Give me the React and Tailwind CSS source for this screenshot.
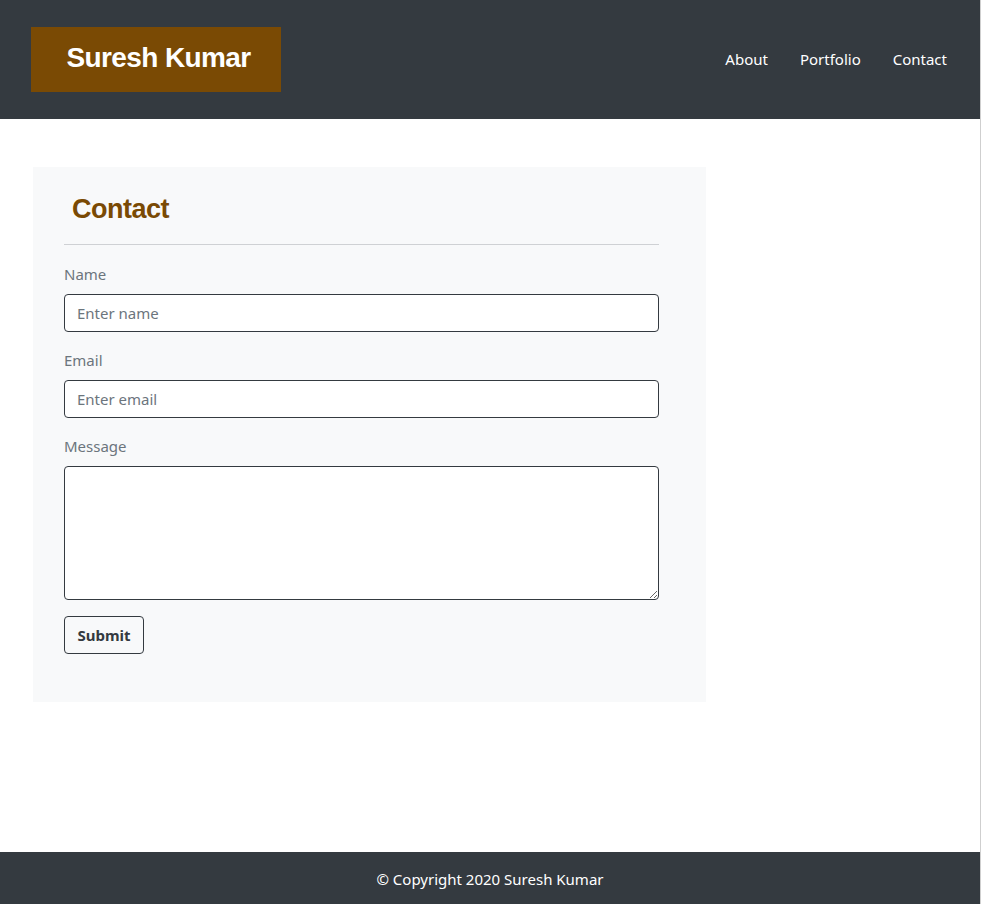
import React, { useState } from 'react';

const NAV = ['About', 'Portfolio', 'Contact'];

const sans = { fontFamily: '"Noto Sans", "Open Sans", sans-serif' };

export default function App() {
  const [form, setForm] = useState({ name: '', email: '', message: '' });

  const update = (key) => (e) => setForm({ ...form, [key]: e.target.value });

  return (
    <div className="flex min-h-screen w-full bg-white" style={sans}>
      <div className="flex min-h-screen w-[980px] flex-col">
        <header className="flex h-[119px] items-center justify-between bg-[#343a40] pl-[31px] pr-[33px]">
          <div className="flex h-[65px] w-[250px] items-center justify-center bg-[#7a4a04] pl-[5px] pb-[3px] font-['Liberation_Sans',Arial,sans-serif] text-[28px] font-bold tracking-[-0.6px] text-white">
            Suresh Kumar
          </div>
          <nav className="flex items-center gap-8 pb-[1px] text-[15px] text-white">
            {NAV.map(item => (
              <a key={item} href="#" className="hover:underline">{item}</a>
            ))}
          </nav>
        </header>

        <main className="flex-1 px-[33px] pt-[48px]">
          <section className="w-[673px] bg-[#f8f9fa] pl-[31px] pr-[47px] pt-[25px] pb-[48px]">
            <h2 className="pl-2 font-['Liberation_Sans',Arial,sans-serif] text-[27px] font-bold leading-[34px] tracking-[-0.5px] text-[#7a4a04]">
              Contact
            </h2>
            <hr className="mt-[18px] border-t border-[#cfd1d4]" />

            <form className="mt-[17px]" onSubmit={e => e.preventDefault()}>
              <div className="mb-4">
                <label className="mb-2 block text-[15px] leading-6 text-[#6c757d]">Name</label>
                <input
                  type="text"
                  placeholder="Enter name"
                  value={form.name}
                  onChange={update('name')}
                  className="block h-[38px] w-full rounded border border-[#343a40] bg-white px-3 text-[15px] text-[#495057] placeholder:text-[#6c757d] outline-none"
                />
              </div>
              <div className="mb-4">
                <label className="mb-2 block text-[15px] leading-6 text-[#6c757d]">Email</label>
                <input
                  type="email"
                  placeholder="Enter email"
                  value={form.email}
                  onChange={update('email')}
                  className="block h-[38px] w-full rounded border border-[#343a40] bg-white px-3 text-[15px] text-[#495057] placeholder:text-[#6c757d] outline-none"
                />
              </div>
              <div className="mb-4">
                <label className="mb-2 block text-[15px] leading-6 text-[#6c757d]">Message</label>
                <textarea
                  value={form.message}
                  onChange={update('message')}
                  className="block h-[134px] w-full rounded border border-[#343a40] bg-white px-3 py-1.5 text-[15px] text-[#495057] outline-none"
                />
              </div>
              <button
                type="submit"
                className="h-[38px] w-[80px] rounded border border-[#343a40] text-[15px] font-bold text-[#343a40]"
              >
                Submit
              </button>
            </form>
          </section>
        </main>

        <footer className="flex h-[52px] items-center justify-center bg-[#343a40] pt-[2px] text-[15px] text-white">
          © Copyright 2020 Suresh Kumar
        </footer>
      </div>
      <div className="w-px bg-[#cfcfcf]" />
    </div>
  );
}
